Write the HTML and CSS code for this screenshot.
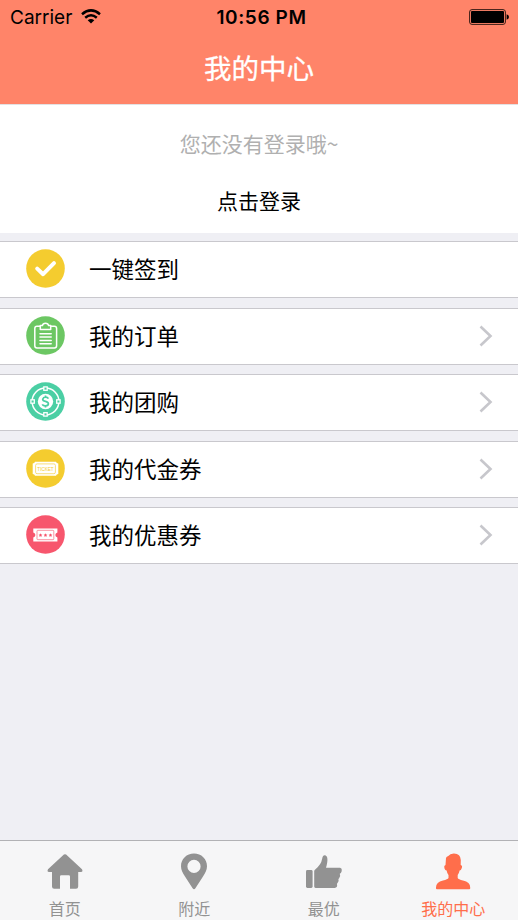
FILE: index.html
```html
<!DOCTYPE html>
<html lang="zh-CN">
<head>
    <meta charset="UTF-8">
    <meta name="viewport" content="width=device-width, initial-scale=1.0">
    <title>我的中心</title>
    <link rel="stylesheet" href="styles.css">
</head>
<body>
    <header class="header">
        <div class="status-bar">
            <div class="status-left">
                <span class="carrier">Carrier</span>
                <svg class="wifi" viewBox="0 0 20 15" fill="none" stroke="#000" stroke-width="2.5">
                    <path d="M1 5.2Q10 -2.4 19 5.2"/>
                    <path d="M4.2 8.7Q10 3.8 15.8 8.7"/>
                    <path d="M10 14.4L6.7 11.2Q10 8.7 13.3 11.2Z" fill="#000" stroke="none"/>
                </svg>
            </div>
            <span class="time">10:56 PM</span>
            <svg class="battery" viewBox="0 0 41 16">
                <rect x="0.6" y="0.6" width="35.8" height="14.8" rx="2.4" fill="none" stroke="#3a1d15" stroke-width="1"/>
                <rect x="2" y="2" width="33" height="12" rx="1"/>
                <path d="M37.6 5.2Q40 6 40 8T37.6 10.8Z"/>
            </svg>
        </div>
        <h1 class="title">我的中心</h1>
    </header>

    <section class="login">
        <p class="login-tip">您还没有登录哦~</p>
        <a class="login-link">点击登录</a>
    </section>

    <ul class="menu">
        <li class="menu-item">
            <svg class="menu-icon" viewBox="0 0 39 39">
                <circle cx="19.5" cy="19.5" r="19.3" fill="#f4cc2f"/>
                <path d="M11.2 19.6L17.1 25.2L28 14.2" fill="none" stroke="#fff" stroke-width="4" stroke-linecap="round" stroke-linejoin="round"/>
            </svg>
            <span class="menu-text">一键签到</span>
        </li>
        <li class="menu-item">
            <svg class="menu-icon" viewBox="0 0 39 39">
                <circle cx="19.5" cy="19.5" r="19.3" fill="#6cc763"/>
                <g fill="none" stroke="#fff" stroke-width="1.5" stroke-linecap="round" stroke-linejoin="round">
                    <path d="M14.2 10.2H11Q8.8 10.2 8.8 12.4V29.8Q8.8 32 11 32H28.4Q30.6 32 30.6 29.8V12.4Q30.6 10.2 28.4 10.2H24.8"/>
                    <path d="M14.3 13.6V9.6H16.4Q16.8 7.2 19.5 7.2T22.6 9.6H24.7V13.6Z"/>
                    <path d="M14 17.8H25.2M14 21.1H25.2M14 24.4H25.2M14 27.7H25.2"/>
                </g>
            </svg>
            <span class="menu-text">我的订单</span>
            <svg class="arrow" viewBox="0 0 14 22"><path d="M1.5 1.5L11.5 11L1.5 20.5"/></svg>
        </li>
        <li class="menu-item">
            <svg class="menu-icon" viewBox="0 0 39 39">
                <circle cx="19.5" cy="19.5" r="19.3" fill="#4bcfa4"/>
                <circle cx="19.5" cy="19.5" r="13.4" fill="none" stroke="#fff" stroke-width="1.5"/>
                <circle cx="19.5" cy="19.5" r="7.7" fill="#fff"/>
                <g fill="#4bcfa4" stroke="#fff" stroke-width="1.3">
                    <rect x="17.8" y="4.9" width="3.4" height="3.4"/>
                    <rect x="17.8" y="30.7" width="3.4" height="3.4"/>
                    <rect x="4.9" y="17.8" width="3.4" height="3.4"/>
                    <rect x="30.7" y="17.8" width="3.4" height="3.4"/>
                </g>
                <path d="M22.4 16.6Q21.7 15.2 19.5 15.2T16.7 17.2Q16.7 18.8 19.5 19.4T22.4 21.8Q22.4 23.8 19.5 23.8T16.5 22.2M19.5 13.4V15.4M19.5 23.6V25.6" fill="none" stroke="#4bcfa4" stroke-width="1.7"/>
            </svg>
            <span class="menu-text">我的团购</span>
            <svg class="arrow" viewBox="0 0 14 22"><path d="M1.5 1.5L11.5 11L1.5 20.5"/></svg>
        </li>
        <li class="menu-item">
            <svg class="menu-icon" viewBox="0 0 39 39">
                <circle cx="19.5" cy="19.5" r="19.3" fill="#f4cc2f"/>
                <path d="M9 12.8H30Q30.4 14.4 32.3 14.6V25Q30.4 25.2 30 26.8H9Q8.6 25.2 6.7 25V14.6Q8.6 14.4 9 12.8Z" fill="#fff"/>
                <rect x="9.6" y="14.9" width="19.8" height="9.8" rx="1.5" fill="none" stroke="#f6d65a" stroke-width="0.8"/>
                <text class="ticket-text" x="19.5" y="21.6" text-anchor="middle">TICKET</text>
            </svg>
            <span class="menu-text">我的代金券</span>
            <svg class="arrow" viewBox="0 0 14 22"><path d="M1.5 1.5L11.5 11L1.5 20.5"/></svg>
        </li>
        <li class="menu-item">
            <svg class="menu-icon" viewBox="0 0 39 39">
                <circle cx="19.5" cy="19.5" r="19.3" fill="#f7566d"/>
                <path d="M7.3 13.6H31.4V17.6Q29.3 18.2 29.3 20T31.4 22.4V26.4H7.3V22.4Q9.4 21.8 9.4 20T7.3 17.6Z" fill="#fff"/>
                <rect x="11" y="15.3" width="16.8" height="9.4" rx="0.8" fill="none" stroke="#f87a8c" stroke-width="0.8"/>
                <g fill="#f7566d">
                    <path id="star" d="M14.5 18.2L15.1 19.4L16.4 19.6L15.5 20.5L15.7 21.8L14.5 21.2L13.3 21.8L13.5 20.5L12.6 19.6L13.9 19.4Z"/>
                    <use href="#star" x="5"/>
                    <use href="#star" x="10"/>
                </g>
            </svg>
            <span class="menu-text">我的优惠券</span>
            <svg class="arrow" viewBox="0 0 14 22"><path d="M1.5 1.5L11.5 11L1.5 20.5"/></svg>
        </li>
    </ul>

    <nav class="tabbar">
        <a class="tab">
            <svg class="tab-icon" viewBox="0 0 38 38">
                <path d="M17.9 1.6Q19 0.7 20.1 1.6L36 16.2Q37.3 18.8 35 19H32.2V33.5Q32.2 35.8 30 35.8H24V23.5Q24 22.2 22.7 22.2H15.3Q14 22.2 14 23.5V35.8H8.2Q6 35.8 6 33.5V19H3Q.7 18.8 2 16.2Z"/>
            </svg>
            <span>首页</span>
        </a>
        <a class="tab">
            <svg class="tab-icon" viewBox="0 0 38 38">
                <path fill-rule="evenodd" d="M19 .5C11.6 .5 6 6 6 13.2C6 17.2 7.8 20 10 23.6L17.6 35.2Q19 37.2 20.4 35.2L28 23.6C30.2 20 32 17.2 32 13.2C32 6 26.4 .5 19 .5ZM19 6.8A6.6 6.6 0 1 1 19 20A6.6 6.6 0 1 1 19 6.8Z"/>
            </svg>
            <span>附近</span>
        </a>
        <a class="tab">
            <svg class="tab-icon" viewBox="0 0 38 38">
                <rect x="1" y="17" width="6.6" height="18" rx="1.4"/>
                <path d="M9.2 18.2Q9.2 17 10.2 16.4Q16.2 12 17.2 5.6Q17.6 2.3 19.6 2.2C23 2.4 23.2 7.4 21 14.8H35Q37.3 15.2 36.6 18.4Q36 20.4 34.8 20.8Q36 23.4 34 25.4L33.4 26Q34.4 28.4 32.4 30.2L31.9 30.8Q33 34.8 29.6 35H10.6Q9.2 35 9.2 33.6Z"/>
            </svg>
            <span>最优</span>
        </a>
        <a class="tab active">
            <svg class="tab-icon" viewBox="0 0 38 38">
                <path d="M12 5Q12.6 3.4 14.3 3Q16 .3 20 .4Q26.6 .6 26.8 7L26.7 12Q28.8 12.6 27.7 15.2Q27 17.5 25.6 17.6Q25 20.5 23.7 22V25Q24.4 26.3 29 27.6Q36.3 29.2 36.2 34.6V35.4Q36.2 36.2 35.2 36.2H3Q2 36.2 2 35.4V34.6Q2 29.2 9 27.6Q13.7 26.3 14.5 25V22Q13.1 20.5 12.6 17.6Q11.1 17.5 10.4 15.2Q9.6 12.6 11.5 12Z"/>
            </svg>
            <span>我的中心</span>
        </a>
    </nav>
</body>
</html>
```
FILE: styles.css
```css
* {
    margin: 0;
    padding: 0;
    box-sizing: border-box;
}

body {
    display: flex;
    flex-direction: column;
    height: 100vh;
    background: #efeff4;
    color: #000;
    font-family: 'Noto Sans CJK SC', sans-serif;
    overflow: hidden;
}

svg {
    display: block;
    flex-shrink: 0;
}

/* 顶部 */
.header {
    height: 104px;
    background: #ff8469;
}

.status-bar {
    display: grid;
    grid-template-columns: 1fr auto 1fr;
    align-items: center;
    height: 33px;
    padding: 0 8px 0 10px;
    font-family: Inter, sans-serif;
    font-size: 19px;
}

.status-left {
    display: flex;
    align-items: center;
    gap: 9px;
}

.carrier,
.time {
    padding-top: 1px;
}

.wifi {
    width: 20px;
    height: 15px;
}

.time {
    padding-left: 3px;
    font-weight: 600;
    letter-spacing: 0.6px;
}

.battery {
    width: 41px;
    height: 16px;
    justify-self: end;
}

.title {
    color: #fff;
    font-size: 27.5px;
    font-weight: 400;
    line-height: 68px;
    text-align: center;
    -webkit-text-stroke: 0.3px #fff;
}

/* 登录 */
.login {
    display: flex;
    flex-direction: column;
    align-items: center;
    height: 129px;
    padding-top: 23px;
    background: #fff;
    border-top: 1px solid #e3e1e3;
    font-size: 21px;
    line-height: 30px;
}

.login-tip {
    color: #b0b0b0;
}

.login-link {
    margin-top: 27px;
}

/* 列表 */
.menu {
    display: flex;
    flex-direction: column;
    gap: 9.5px;
    margin-top: 8px;
    list-style: none;
}

.menu-item {
    display: flex;
    align-items: center;
    height: 57px;
    padding: 0 25px 2px 25.5px;
    background: #fff;
    border-top: 1px solid #c9c8cd;
    border-bottom: 1px solid #c9c8cd;
}

.menu-icon {
    width: 39px;
    height: 39px;
}

.menu-text {
    flex: 1;
    margin-left: 24.5px;
    padding-bottom: 1px;
    font-size: 22.5px;
    line-height: 34px;
}

.arrow {
    width: 14px;
    height: 22px;
    margin-top: 1px;
    fill: none;
    stroke: #c7c7cc;
    stroke-width: 2.6;
}

.ticket-text {
    fill: #f4cc2f;
    font-family: 'Liberation Sans', sans-serif;
    font-size: 4.6px;
}

/* 底部导航 */
.tabbar {
    display: flex;
    height: 80px;
    margin-top: auto;
    background: #f6f6f7;
    border-top: 1px solid #b2b2b5;
}

.tab {
    display: flex;
    flex: 1;
    flex-direction: column;
    align-items: center;
    padding-top: 12px;
    color: #929292;
    font-size: 16px;
    line-height: 24px;
}

.tab-icon {
    width: 38px;
    height: 38px;
    margin-bottom: 5px;
    fill: currentColor;
}

.tab.active {
    color: #ff6e4b;
}
```
